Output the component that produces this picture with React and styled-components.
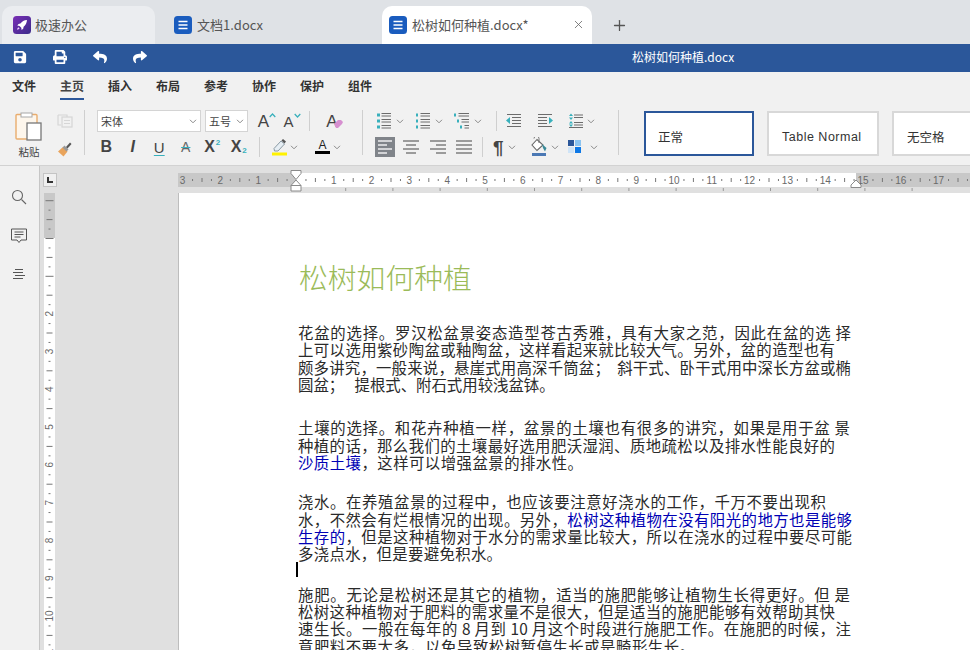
import styled, { createGlobalStyle } from "styled-components";
import { FaSave, FaPrint, FaReply, FaShare } from "react-icons/fa";
import { X, Plus } from "lucide-react";

const GlobalStyle = createGlobalStyle`
  html, body { margin: 0; padding: 0; overflow: hidden; }
  body { font-family: "Noto Sans CJK SC", "Liberation Sans", sans-serif; color: #333; }
  * { box-sizing: border-box; }
`;

const Shell = styled.div`
  width: 970px;
  height: 650px;
  display: flex;
  flex-direction: column;
  overflow: hidden;
  background: #e0e0e0;
`;

/* ---- tabs ---- */
const TabBar = styled.div`
  height: 44px;
  flex: none;
  background: #dfe2e6;
  display: flex;
  align-items: flex-end;
  padding-left: 2px;
`;

const Tab = styled.div`
  height: 38px;
  border-radius: 10px 10px 0 0;
  display: flex;
  align-items: center;
  gap: ${(p) => p.$gap || 5}px;
  font-size: 13px;
  color: #555;
  width: ${(p) => p.$w}px;
  margin-right: ${(p) => p.$mr || 0}px;
  padding-left: ${(p) => p.$pl}px;
  padding-bottom: 1px;
  background: ${(p) => p.$bg || "transparent"};
`;

const TabClose = styled.div`
  margin-left: auto;
  margin-right: 7px;
  display: flex;
  color: #666;
`;

const NewTab = styled.div`
  width: 20px;
  height: 38px;
  margin-left: 17px;
  display: flex;
  align-items: center;
  justify-content: center;
  color: #555;
`;

/* ---- blue bar ---- */
const QuickBar = styled.div`
  height: 28px;
  flex: none;
  background: #2b579a;
  display: flex;
  align-items: center;
  padding-bottom: 3px;
  color: #fff;
`;

const QuickIcon = styled.div`
  width: 40px;
  display: flex;
  justify-content: center;
  font-size: 14px;
`;

const DocTitle = styled.div`
  margin-left: 472px;
  font-size: 12px;
  color: #fff;
  white-space: nowrap;
`;

/* ---- menu ---- */
const MenuBar = styled.div`
  height: 28px;
  flex: none;
  background: #f1f1f1;
  display: flex;
  gap: 24px;
  padding-left: 12px;
`;

const MenuItem = styled.div`
  height: 28px;
  line-height: 27px;
  font-size: 12px;
  font-weight: 700;
  color: ${(p) => (p.$active ? "#444" : "#333")};
  border-bottom: 2px solid ${(p) => (p.$active ? "#2b579a" : "transparent")};
`;

/* ---- toolbar ---- */
const Toolbar = styled.div`
  height: 66px;
  flex: none;
  background: #f1f1f1;
  border-bottom: 1px solid #d2d2d2;
  display: flex;
  padding: 10px 0 0 12px;
  overflow: hidden;
`;

const PasteCol = styled.div`
  width: 34px;
  flex: none;
  display: flex;
  flex-direction: column;
  align-items: center;
  font-size: 10.5px;
  line-height: 14px;
  color: #444;
  gap: 4px;
  padding-top: 2px;
`;

const SmallCol = styled.div`
  width: 38px;
  flex: none;
  display: flex;
  flex-direction: column;
  align-items: center;
  gap: 13px;
  padding-top: 3px;
`;

const GroupSep = styled.div`
  width: 1px;
  height: 45px;
  background: #cfcfcf;
  margin: 0 ${(p) => p.$r || 0}px 0 ${(p) => p.$l || 0}px;
  flex: none;
`;

const Group = styled.div`
  display: flex;
  flex-direction: column;
  gap: 4px;
  width: ${(p) => p.$w}px;
  flex: none;
`;

const Row = styled.div`
  display: flex;
  align-items: center;
  height: 22px;
  padding-left: ${(p) => p.$pl || 0}px;
`;

const RowSep = styled.div`
  width: 1px;
  height: 20px;
  background: #cfcfcf;
  flex: none;
  margin: 0 ${(p) => p.$r || 0}px 0 ${(p) => p.$l || 0}px;
`;

const Select = styled.div`
  height: 22px;
  width: ${(p) => p.$w}px;
  margin-right: 4px;
  flex: none;
  background: #fff;
  border: 1px solid #d4d4d4;
  display: flex;
  align-items: center;
  justify-content: space-between;
  padding: 0 3px;
  font-size: 11px;
  color: #444;
`;

const Tool = styled.div`
  width: ${(p) => p.$w}px;
  height: 22px;
  flex: none;
  display: flex;
  align-items: center;
  justify-content: ${(p) => (p.$split ? "flex-start" : "center")};
  gap: ${(p) => p.$gap ?? 4}px;
  margin-left: ${(p) => p.$ml || 0}px;
  padding-left: ${(p) => p.$pl || 0}px;
  color: #444;
`;

const Letter = styled.span`
  font-family: "Liberation Sans", sans-serif;
  font-size: ${(p) => p.$size || 15}px;
  font-weight: ${(p) => (p.$bold ? 700 : 400)};
  font-style: ${(p) => (p.$italic ? "italic" : "normal")};
  color: ${(p) => p.$color || "#444"};
  line-height: 1;
  position: relative;
  text-decoration: ${(p) => p.$deco || "none"};
  text-decoration-color: #38b0bc;
  text-underline-offset: 2px;
`;

const ColorLetter = styled(Letter)`
  display: block;
  text-align: center;
`;

const Script = styled.span`
  font-family: "Liberation Sans", sans-serif;
  font-size: 8px;
  font-weight: 700;
  color: #38b0bc;
  line-height: 1;
  align-self: ${(p) => (p.$up ? "flex-start" : "flex-end")};
  margin: ${(p) => (p.$up ? "3px 0 0 1px" : "0 0 3px 1px")};
`;

const Styles = styled.div`
  display: flex;
  gap: 13px;
  margin-left: 25px;
  margin-top: 1px;
`;

const StyleCard = styled.div`
  flex: none;
  width: ${(p) => p.$w}px;
  height: 45px;
  background: #fff;
  border: ${(p) => (p.$active ? "2px solid #2b579a" : "2px solid #d8d8d8")};
  padding: 14px 0 0 ${(p) => (p.$active ? 12 : 13)}px;
  font-size: 12.5px;
  line-height: 20px;
  color: #333;
  white-space: nowrap;
  font-family: ${(p) => (p.$latin ? '"Liberation Sans", sans-serif' : "inherit")};
  letter-spacing: ${(p) => (p.$latin ? ".5px" : "0")};
`;

/* ---- workspace ---- */
const Workspace = styled.div`
  flex: 1;
  min-height: 0;
  display: flex;
`;

const SidePanel = styled.div`
  width: 40px;
  flex: none;
  background: #f1f1f1;
  border-right: 1px solid #c6c6c6;
  display: flex;
  flex-direction: column;
  align-items: center;
  padding: 22px 1px 0 0;
  gap: 21px;
`;

const SideIcon = styled.div`
  height: 18px;
  display: flex;
  align-items: center;
`;

const Canvas = styled.div`
  flex: 1;
  min-width: 0;
  display: grid;
  grid-template-columns: 138px 1fr;
  grid-template-rows: 27px 1fr;
  background: #e0e0e0;
  overflow: hidden;
`;

const Corner = styled.div`
  width: 14px;
  height: 14px;
  margin: 7px 0 0 3px;
  background: #f0f0f0;
  border: 1px solid #c4c4c4;
  display: flex;
  align-items: center;
  justify-content: center;
`;

const VRulerCell = styled.div`
  padding-left: 4px;
  overflow: hidden;
`;

const Page = styled.div`
  background: #fff;
  border-left: 1px solid #bdbdbd;
  padding: 64px 0 0 119px;
  overflow: hidden;
  font-size: 15.4px;
  color: #2a2a2a;
`;

const Title = styled.div`
  font-size: 28.8px;
  line-height: 40px;
  color: #9bbb59;
  margin: 0 0 27px 1px;
  white-space: nowrap;
  font-weight: 300;
`;

const Para = styled.div`
  margin-top: ${(p) => p.$mt || 0}px;
`;

const Line = styled.div`
  height: 17.33px;
  line-height: 17.33px;
  width: ${(p) => p.$w}px;
  white-space: nowrap;
  text-align: justify;
  text-align-last: justify;
`;

const Blue = styled.span`
  color: #0000b4;
`;

const Caret = styled.div`
  width: 2px;
  height: 15px;
  margin: -1px 0 0 -2px;
  background: #000;
`;

const AlignBox = styled.div`
  width: 20px;
  height: 20px;
  flex: none;
  background: #80848a;
  display: flex;
  align-items: center;
  justify-content: center;
`;

/* ---- small drawings ---- */
const Chev = () => (
  <svg width="8" height="5" viewBox="0 0 8 5" fill="none" stroke="#8a8a8a" strokeWidth="1">
    <path d="M1 .8 4 3.8 7 .8" />
  </svg>
);

const Rocket = () => (
  <svg width="18" height="18" viewBox="0 0 18 18">
    <defs>
      <linearGradient id="rk" x1="0" y1="0" x2="1" y2="1">
        <stop offset="0" stopColor="#7a2fb5" />
        <stop offset="1" stopColor="#3a2a8a" />
      </linearGradient>
    </defs>
    <rect width="18" height="18" rx="3.5" fill="url(#rk)" />
    <path d="M14 4c-3 .2-5 1.5-6.6 3.6L5.5 8 4.3 9.6l2.2.3 1.8 1.8.3 2.2 1.6-1.2.4-1.9C12.5 9.2 13.8 7 14 4Z" fill="#fff" />
    <path d="M5.5 11.2c-.9.4-1.3 1.3-1.4 2.5 1.2-.1 2.1-.5 2.5-1.4Z" fill="#f2c6ff" />
  </svg>
);

const DocIcon = () => (
  <svg width="18" height="18" viewBox="0 0 18 18">
    <rect width="18" height="18" rx="3.5" fill="#1a5cbe" />
    <path d="M4.5 5.5h9M4.5 9h9M4.5 12.5h9" stroke="#fff" strokeWidth="1.3" />
  </svg>
);

const PasteIcon = () => (
  <svg width="28" height="29" viewBox="0 0 28 29" fill="none">
    <rect x="1" y="2.500" width="21" height="24.5" rx="1" fill="#fdf6ec" stroke="#e9ad6e" strokeWidth="1.4" />
    <rect x="6" y="1" width="11" height="4" fill="#fff" stroke="#a8a8a8" />
    <rect x="12" y="11" width="14" height="17" fill="#fff" stroke="#777" strokeWidth="1.3" />
  </svg>
);

const CopyIcon = () => (
  <svg width="16" height="15" viewBox="0 0 16 15" fill="none" stroke="#d6d6d6" strokeWidth="1.2">
    <path d="M1 2h9v2M1 2v10h3" />
    <rect x="5" y="4" width="10" height="10" />
    <path d="M7 7.5h6M7 10.5h6" />
  </svg>
);

const BrushIcon = () => (
  <svg width="16" height="16" viewBox="0 0 16 16">
    <path d="M1 10.5 6 6l4.5 4.5L6.5 15.5Z" fill="#e9a45c" />
    <path d="M5.500 6.500 7.500 4.500 11.500 8.500 9.500 10.500Z" fill="#999" />
    <path d="M9 6l4-4.500 1.500 1.500L10.500 7.500Z" fill="#555" />
  </svg>
);

const SizeCaret = ({ up }) => (
  <svg width="7" height="5" viewBox="0 0 7 5" fill="none" stroke="#38b0bc" strokeWidth="1.2" style={{ alignSelf: "flex-start", marginTop: 3 }}>
    <path d={up ? "M.7 4 3.5 1 6.3 4" : "M.7 1 3.5 4 6.3 1"} />
  </svg>
);

const Eraser = () => (
  <svg width="9" height="8" viewBox="0 0 9 8" style={{ position: "absolute", left: 8, top: 7 }}>
    <path d="M0 4 4 0h3l2 2-1 2-4 4H2Z" fill="#d68fd0" />
  </svg>
);

const PenIcon = () => (
  <svg width="16" height="20" viewBox="0 0 16 20">
    <path d="M2 11.5 9 4l3.5 3L6 14H2.5Z" fill="#e6eef4" stroke="#8a9aa4" strokeWidth="1" />
    <path d="M9.500 3.500 11 2l3 2.500-1.500 2Z" fill="#555" />
    <rect x="0" y="15.500" width="15" height="3" fill="#fff200" />
  </svg>
);

const FontColorBar = () => (
  <svg width="15" height="4" viewBox="0 0 15 4" style={{ display: "block" }}>
    <rect width="15" height="3" fill="#000" />
  </svg>
);

const Lines = ({ rows, dark }) => (
  <svg width="20" height="18" viewBox="0 0 20 18" fill="none">
    {rows.map(([x1, x2, y], i) => (
      <path key={i} d={`M${x1} ${y}H${x2}`} stroke={dark || "#6c6c6c"} strokeWidth="1.3" />
    ))}
  </svg>
);

const ListIcon = ({ kind }) => {
  const dots = kind === "multi" ? [[2, 3], [5, 9], [8, 15]] : [[3, 3], [3, 9], [3, 15]];
  return (
    <svg width="18" height="18" viewBox="0 0 18 18" fill="none">
      {dots.map(([x, y], i) => (
        <rect key={i} x={x - 1} y={y - 1.5} width={kind === "bullet" ? 3 : 2} height="3" fill="#38b0bc" />
      ))}
      {dots.map(([x, y], i) => (
        <path key={"l" + i} d={`M${x + 3.5} ${y - 1.5}H16M${x + 3.5} ${y + 1}H16`} stroke="#6c6c6c" strokeWidth="1" />
      ))}
    </svg>
  );
};

const IndentIcon = ({ flip }) => (
  <svg width="16" height="16" viewBox="0 0 16 16" fill="none" style={{ transform: flip ? "scaleX(-1)" : "none" }}>
    <path d="M1 1.5h14M6 4.5h9M6 7.5h9M6 10.5h9M1 13.5h14" stroke="#6c6c6c" strokeWidth="1.2" />
    <path d="M4 4v7L0 7.5Z" fill="#38b0bc" />
  </svg>
);

const SpacingIcon = () => (
  <svg width="16" height="16" viewBox="0 0 16 16" fill="none">
    <path d="M6 2h9M6 4.500h9M6 9.500h9M6 12h9M1 14.500h14" stroke="#6c6c6c" strokeWidth="1.1" />
    <path d="M3 .5 5 3H1ZM3 7 5 4.500H1ZM3 8 5 10.500H1ZM3 14 5 11.500H1Z" fill="#38b0bc" />
  </svg>
);

const FillIcon = () => (
  <svg width="17" height="20" viewBox="0 0 17 20" fill="none">
    <path d="M6 2.500 1 8l5 5.500L12 8Z" fill="#fff" stroke="#666" strokeWidth="1.1" />
    <path d="M3 1.500a2.500 2.500 0 0 1 5 0V6" stroke="#777" strokeWidth="1" />
    <path d="M11 7l4.500 4-1.500 3.500-2-3.500Z" fill="#3a8a98" />
    <rect x="1" y="16" width="14" height="3" fill="#4b78b4" />
  </svg>
);

const ShadeIcon = () => (
  <svg width="14" height="14" viewBox="0 0 14 14">
    <rect x="0" y="0" width="6" height="6" fill="#2b579a" />
    <rect x="7" y="0" width="6" height="6" fill="#8cc4f0" />
    <rect x="0" y="7" width="6" height="6" fill="#cfe4f7" />
    <rect x="7" y="7" width="6" height="6" fill="#0d78e6" />
  </svg>
);

const SearchIcon = () => (
  <svg width="16" height="16" viewBox="0 0 16 16" fill="none" stroke="#666" strokeWidth="1.1">
    <circle cx="6.500" cy="6.500" r="5" />
    <path d="m10.500 10.500 4.500 4.500" />
  </svg>
);

const CommentIcon = () => (
  <svg width="16" height="16" viewBox="0 0 16 16" fill="none" stroke="#555" strokeWidth="1">
    <path d="M.5 1h15v11H10l-2 2.500L6 12H.5Z" />
    <path d="M3.500 4h9M3.500 6.500h9M3.500 9h6" />
  </svg>
);

const OutlineIcon = () => (
  <svg width="14" height="12" viewBox="0 0 14 12" fill="none" stroke="#555" strokeWidth="1">
    <path d="M3 .5h8M1 3.500h10M3 6.500h10M1 9.500h10" />
  </svg>
);

/* ---- rulers ---- */
const CM = 37.8;

const HRuler = () => {
  const zero = 118;
  const end = 678;
  const marks = [];
  for (let n = -3; n <= 18; n++) {
    const x = zero + n * CM;
    if (n !== 0) {
      marks.push(
        <text key={"t" + n} x={x} y="18" textAnchor="middle" fontSize="10" fill="#6a6a6a" fontFamily="Liberation Sans">
          {Math.abs(n)}
        </text>
      );
    }
    [0.25, 0.75].forEach((q) =>
      marks.push(<rect key={`q${n}${q}`} x={x + q * CM} y="13" width="1" height="2" fill="#777" />)
    );
    marks.push(<rect key={"h" + n} x={x + 0.5 * CM} y="12" width="1" height="4" fill="#777" />);
  }
  const tabs = [];
  for (let k = 1; k < 14; k++) {
    tabs.push(<rect key={k} x={120 + k * 47.2} y="22" width="1" height="3" fill="#999" />);
  }
  return (
    <svg width="792" height="27" viewBox="0 0 792 27" style={{ display: "block" }}>
      <rect x="0" y="7" width="792" height="14" fill="#c8c8c8" />
      <rect x={zero} y="7" width={end - zero} height="14" fill="#fff" />
      {marks}
      {tabs}
      <path d="M113 4.500h10v3l-5 6-5-6Z" fill="#fff" stroke="#8a8a8a" />
      <path d="M118 14l5 5.500v5.500h-10v-5.500Z" fill="#fff" stroke="#8a8a8a" />
      <path d="M113 19.500h10" stroke="#8a8a8a" />
      <path d="M678 14l5 5v2.500h-10v-2.500Z" fill="#fff" stroke="#8a8a8a" />
    </svg>
  );
};

const VRuler = () => {
  const zero = 45;
  const marks = [];
  for (let n = -2; n <= 12; n++) {
    const y = zero + n * CM;
    if (n > 1) {
      marks.push(
        <text key={"t" + n} x="5.5" y={y + 3.5} transform={`rotate(-90 5.5 ${y})`} textAnchor="middle" fontSize="10" fill="#6a6a6a" fontFamily="Liberation Sans">
          {n}
        </text>
      );
    } else {
      marks.push(<rect key={"n" + n} x="1.5" y={y} width="8" height="1" fill="#777" />);
    }
    [0.25, 0.75].forEach((q) =>
      marks.push(<rect key={`q${n}${q}`} x="4.5" y={y + q * CM} width="2" height="1" fill="#777" />)
    );
    marks.push(<rect key={"h" + n} x="2.5" y={y + 0.5 * CM} width="6" height="1" fill="#777" />);
  }
  return (
    <svg width="11" height="457" viewBox="0 0 11 457" style={{ display: "block" }}>
      <rect width="11" height="457" fill="#fff" />
      <rect width="11" height={zero} fill="#c8c8c8" />
      {marks}
    </svg>
  );
};

const menu = ["文件", "主页", "插入", "布局", "参考", "协作", "保护", "组件"];

export default function App() {
  return (
    <Shell>
      <GlobalStyle />
      <TabBar>
        <Tab $w={153} $mr={8} $pl={11} $gap={4} $bg="#ebedf0"><Rocket />极速办公</Tab>
        <Tab $w={219} $pl={11}><DocIcon />文档1.docx</Tab>
        <Tab $w={210} $pl={7} $bg="#fff">
          <DocIcon />松树如何种植.docx*
          <TabClose><X size={13} strokeWidth={1.5} /></TabClose>
        </Tab>
        <NewTab><Plus size={17} strokeWidth={1.8} /></NewTab>
      </TabBar>

      <QuickBar>
        <QuickIcon><FaSave /></QuickIcon>
        <QuickIcon><FaPrint /></QuickIcon>
        <QuickIcon><FaReply /></QuickIcon>
        <QuickIcon><FaShare /></QuickIcon>
        <DocTitle>松树如何种植.docx</DocTitle>
      </QuickBar>

      <MenuBar>
        {menu.map((m) => (
          <MenuItem key={m} $active={m === "主页"}>{m}</MenuItem>
        ))}
      </MenuBar>

      <Toolbar>
        <PasteCol>
          <PasteIcon />
          粘贴
        </PasteCol>
        <SmallCol>
          <CopyIcon />
          <BrushIcon />
        </SmallCol>
        <GroupSep $r={8} />

        <Group $w={269}>
          <Row $pl={4}>
            <Select $w={104}>宋体<Chev /></Select>
            <Select $w={43}>五号<Chev /></Select>
            <Tool $w={26} $gap={0} $ml={2}><Letter $size={17}>A</Letter><SizeCaret up /></Tool>
            <Tool $w={24} $gap={0}><Letter $size={15}>A</Letter><SizeCaret /></Tool>
            <RowSep $l={5} />
            <Tool $w={44}>
              <Letter $size={17}>A<Eraser /></Letter>
            </Tool>
          </Row>
          <Row>
            <Tool $w={26.5}><Letter $size={16} $bold>B</Letter></Tool>
            <Tool $w={26.5}><Letter $size={16} $italic $bold>I</Letter></Tool>
            <Tool $w={26.5}><Letter $size={15} $deco="underline">U</Letter></Tool>
            <Tool $w={26.5}><Letter $size={14} $color="#666" $deco="line-through">A</Letter></Tool>
            <Tool $w={26.5} $gap={0}><Letter $size={16} $bold>X</Letter><Script $up>2</Script></Tool>
            <Tool $w={26.5} $gap={0}><Letter $size={16} $bold>X</Letter><Script>2</Script></Tool>
            <RowSep $l={7} $r={12} />
            <Tool $w={37} $split $gap={2}><PenIcon /><Chev /></Tool>
            <Tool $w={43} $split $gap={3} $pl={6}>
              <div>
                <ColorLetter $size={12} $color="#222">A</ColorLetter>
                <FontColorBar />
              </div>
              <Chev />
            </Tool>
          </Row>
        </Group>
        <GroupSep $r={12} />

        <Group $w={243}>
          <Row>
            <Tool $w={39} $split $gap={3}><ListIcon kind="bullet" /><Chev /></Tool>
            <Tool $w={39} $split $gap={3}><ListIcon kind="number" /><Chev /></Tool>
            <Tool $w={39} $split $gap={3}><ListIcon kind="multi" /><Chev /></Tool>
            <RowSep $l={4} $r={9} />
            <Tool $w={31} $split><IndentIcon /></Tool>
            <Tool $w={31} $split><IndentIcon flip /></Tool>
            <Tool $w={34} $split $gap={3}><SpacingIcon /><Chev /></Tool>
          </Row>
          <Row>
            <AlignBox>
              <Lines dark="#fff" rows={[[3, 17, 3], [3, 12, 7], [3, 17, 11], [3, 12, 15]]} />
            </AlignBox>
            <Tool $w={26} $ml={3}><Lines rows={[[2, 18, 3], [5, 15, 7], [2, 18, 11], [5, 15, 15]]} /></Tool>
            <Tool $w={27}><Lines rows={[[2, 18, 3], [8, 18, 7], [2, 18, 11], [8, 18, 15]]} /></Tool>
            <Tool $w={26}><Lines rows={[[2, 18, 3], [2, 18, 7], [2, 18, 11], [2, 18, 15]]} /></Tool>
            <RowSep $l={5} $r={10} />
            <Tool $w={38} $split $gap={4}><Letter $size={19} $bold>¶</Letter><Chev /></Tool>
            <Tool $w={37} $split $gap={3}><FillIcon /><Chev /></Tool>
            <Tool $w={36} $split $gap={8}><ShadeIcon /><Chev /></Tool>
          </Row>
        </Group>
        <GroupSep />

        <Styles>
          <StyleCard $w={110} $active>正常</StyleCard>
          <StyleCard $w={112} $latin>Table Normal</StyleCard>
          <StyleCard $w={112}>无空格</StyleCard>
        </Styles>
      </Toolbar>

      <Workspace>
        <SidePanel>
          <SideIcon><SearchIcon /></SideIcon>
          <SideIcon><CommentIcon /></SideIcon>
          <SideIcon><OutlineIcon /></SideIcon>
        </SidePanel>
        <Canvas>
          <Corner>
            <svg width="8" height="8" viewBox="0 0 8 8"><path d="M1 1h2v4h4v2H1Z" fill="#333" /></svg>
          </Corner>
          <HRuler />
          <VRulerCell><VRuler /></VRulerCell>
          <Page>
            <Title>松树如何种植</Title>
            <Para>
              <Line $w={553}>花盆的选择。罗汉松盆景姿态造型苍古秀雅，具有大家之范，因此在盆的选 择</Line>
              <Line $w={537}>上可以选用紫砂陶盆或釉陶盆，这样看起来就比较大气。另外，盆的造型也有</Line>
              <Line $w={553}>颇多讲究，一般来说，悬崖式用高深千筒盆；&nbsp;&nbsp;斜干式、卧干式用中深长方盆或椭</Line>
              <Line $w={252}>圆盆；&nbsp;&nbsp;&nbsp;提根式、附石式用较浅盆钵。</Line>
            </Para>
            <Para $mt={26}>
              <Line $w={552}>土壤的选择。和花卉种植一样，盆景的土壤也有很多的讲究，如果是用于盆 景</Line>
              <Line $w={537}>种植的话，那么我们的土壤最好选用肥沃湿润、质地疏松以及排水性能良好的</Line>
              <Line $w={285}><Blue>沙质土壤</Blue>，这样可以增强盆景的排水性。</Line>
            </Para>
            <Para $mt={22}>
              <Line $w={528}>浇水。在养殖盆景的过程中，也应该要注意好浇水的工作，千万不要出现积</Line>
              <Line $w={554}>水，不然会有烂根情况的出现。另外，<Blue>松树这种植物在没有阳光的地方也是能够</Blue></Line>
              <Line $w={554}><Blue>生存的</Blue>，但是这种植物对于水分的需求量比较大，所以在浇水的过程中要尽可能</Line>
              <Line $w={204}>多浇点水，但是要避免积水。</Line>
              <Caret />
            </Para>
            <Para $mt={9}>
              <Line $w={552}>施肥。无论是松树还是其它的植物，适当的施肥能够让植物生长得更好。但 是</Line>
              <Line $w={537}>松树这种植物对于肥料的需求量不是很大，但是适当的施肥能够有效帮助其快</Line>
              <Line $w={553}>速生长。一般在每年的 8 月到 10 月这个时段进行施肥工作。在施肥的时候，注</Line>
              <Line $w={397}>意肥料不要太多，以免导致松树暂停生长或是畸形生长。</Line>
            </Para>
          </Page>
        </Canvas>
      </Workspace>
    </Shell>
  );
}
